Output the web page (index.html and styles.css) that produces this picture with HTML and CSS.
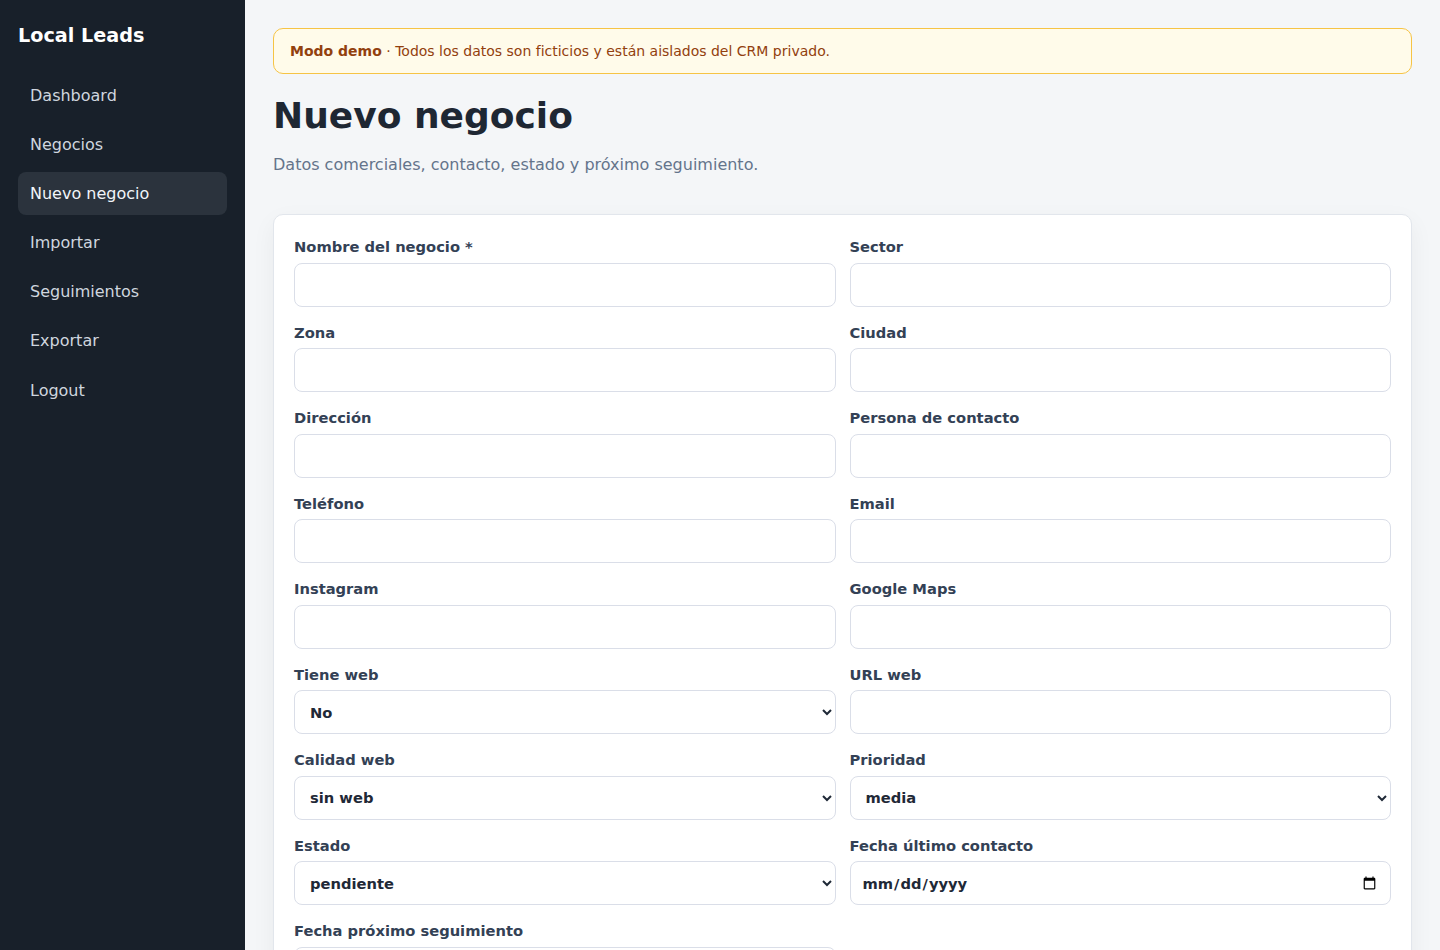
FILE: index.html
```html
<!DOCTYPE html>
<html lang="es">
<head>
  <meta charset="UTF-8">
  <meta name="viewport" content="width=device-width, initial-scale=1.0">
  <title>Nuevo negocio · Local Leads</title>
  <link rel="stylesheet" href="styles.css">
</head>
<body>
  <aside class="sidebar">
    <div class="brand">Local Leads</div>
    <nav class="nav">
      <a href="#">Dashboard</a>
      <a href="#">Negocios</a>
      <a href="#" class="active">Nuevo negocio</a>
      <a href="#">Importar</a>
      <a href="#">Seguimientos</a>
      <a href="#">Exportar</a>
      <a href="#">Logout</a>
    </nav>
  </aside>

  <main class="main">
    <div class="demo-banner">
      <strong>Modo demo</strong> · Todos los datos son ficticios y están aislados del CRM privado.
    </div>

    <h1>Nuevo negocio</h1>
    <p class="subtitle">Datos comerciales, contacto, estado y próximo seguimiento.</p>

    <form class="card">
      <div class="grid">
        <label class="field">Nombre del negocio *
          <input type="text" name="nombre" required>
        </label>
        <label class="field">Sector
          <input type="text" name="sector">
        </label>
        <label class="field">Zona
          <input type="text" name="zona">
        </label>
        <label class="field">Ciudad
          <input type="text" name="ciudad">
        </label>
        <label class="field">Dirección
          <input type="text" name="direccion">
        </label>
        <label class="field">Persona de contacto
          <input type="text" name="contacto">
        </label>
        <label class="field">Teléfono
          <input type="text" name="telefono">
        </label>
        <label class="field">Email
          <input type="email" name="email">
        </label>
        <label class="field">Instagram
          <input type="text" name="instagram">
        </label>
        <label class="field">Google Maps
          <input type="text" name="maps">
        </label>
        <label class="field">Tiene web
          <select name="tiene_web">
            <option>No</option>
            <option>Sí</option>
          </select>
        </label>
        <label class="field">URL web
          <input type="text" name="url_web">
        </label>
        <label class="field">Calidad web
          <select name="calidad_web">
            <option>sin web</option>
            <option>mala</option>
            <option>regular</option>
            <option>buena</option>
          </select>
        </label>
        <label class="field">Prioridad
          <select name="prioridad">
            <option>baja</option>
            <option selected>media</option>
            <option>alta</option>
          </select>
        </label>
        <label class="field">Estado
          <select name="estado">
            <option>pendiente</option>
            <option>contactado</option>
            <option>interesado</option>
            <option>descartado</option>
          </select>
        </label>
        <label class="field">Fecha último contacto
          <input type="date" name="ultimo_contacto">
        </label>
        <label class="field">Fecha próximo seguimiento
          <input type="date" name="proximo_seguimiento">
        </label>
      </div>
    </form>
  </main>
</body>
</html>
```

FILE: styles.css
```css
* {
  box-sizing: border-box;
}
body {
  margin: 0;
  display: flex;
  min-height: 100vh;
  font-family: "DejaVu Sans", sans-serif;
  background-color: #f4f6f8;
  color: #1f2937;
}
/* Dark navigation column on the left */
.sidebar {
  width: 245px;
  flex-shrink: 0;
  background-color: #18202a;
  padding: 24px 18px;
}
.brand {
  color: #fff;
  font-size: 19.2px;
  font-weight: 700;
  margin-bottom: 27px;
}
.nav {
  display: flex;
  flex-direction: column;
  gap: 6.1px;
}
.nav a {
  display: block;
  padding: 12px;
  border-radius: 8px;
  color: #cfd6df;
  text-decoration: none;
  font-size: 16px;
}
.nav a.active {
  background-color: #2b333d;
  color: #f1f5f9;
}
/* Page content */
.main {
  flex: 1;
  padding: 28px;
}
.demo-banner {
  background-color: #fffbea;
  border: 1px solid #f6c445;
  border-radius: 10px;
  padding: 14px 16px;
  font-size: 14px;
  color: #92400e;
}
.demo-banner strong {
  font-weight: 700;
}
h1 {
  margin: 21px 0 0;
  font-size: 36px;
  font-weight: 700;
  color: #1e2733;
}
.subtitle {
  margin: 19px 0 0;
  font-size: 16px;
  color: #64748b;
}
/* Form card */
.card {
  margin-top: 40px;
  background-color: #fff;
  border: 1px solid #e2e6ec;
  border-radius: 10px;
  padding: 23px 20px;
  box-shadow: 0 8px 24px rgba(15, 23, 42, 0.05);
}
.grid {
  display: grid;
  grid-template-columns: 1fr 1fr;
  column-gap: 14px;
  row-gap: 17px;
}
.field {
  display: flex;
  flex-direction: column;
  gap: 7.5px;
  font-size: 14.7px;
  font-weight: 700;
  color: #334155;
}
.field input,
.field select {
  height: 44px;
  width: 100%;
  padding: 0 11px;
  border: 1px solid #dadee8;
  border-radius: 8px;
  background-color: #fff;
  font: inherit;
  color: #1f2937;
}
```
